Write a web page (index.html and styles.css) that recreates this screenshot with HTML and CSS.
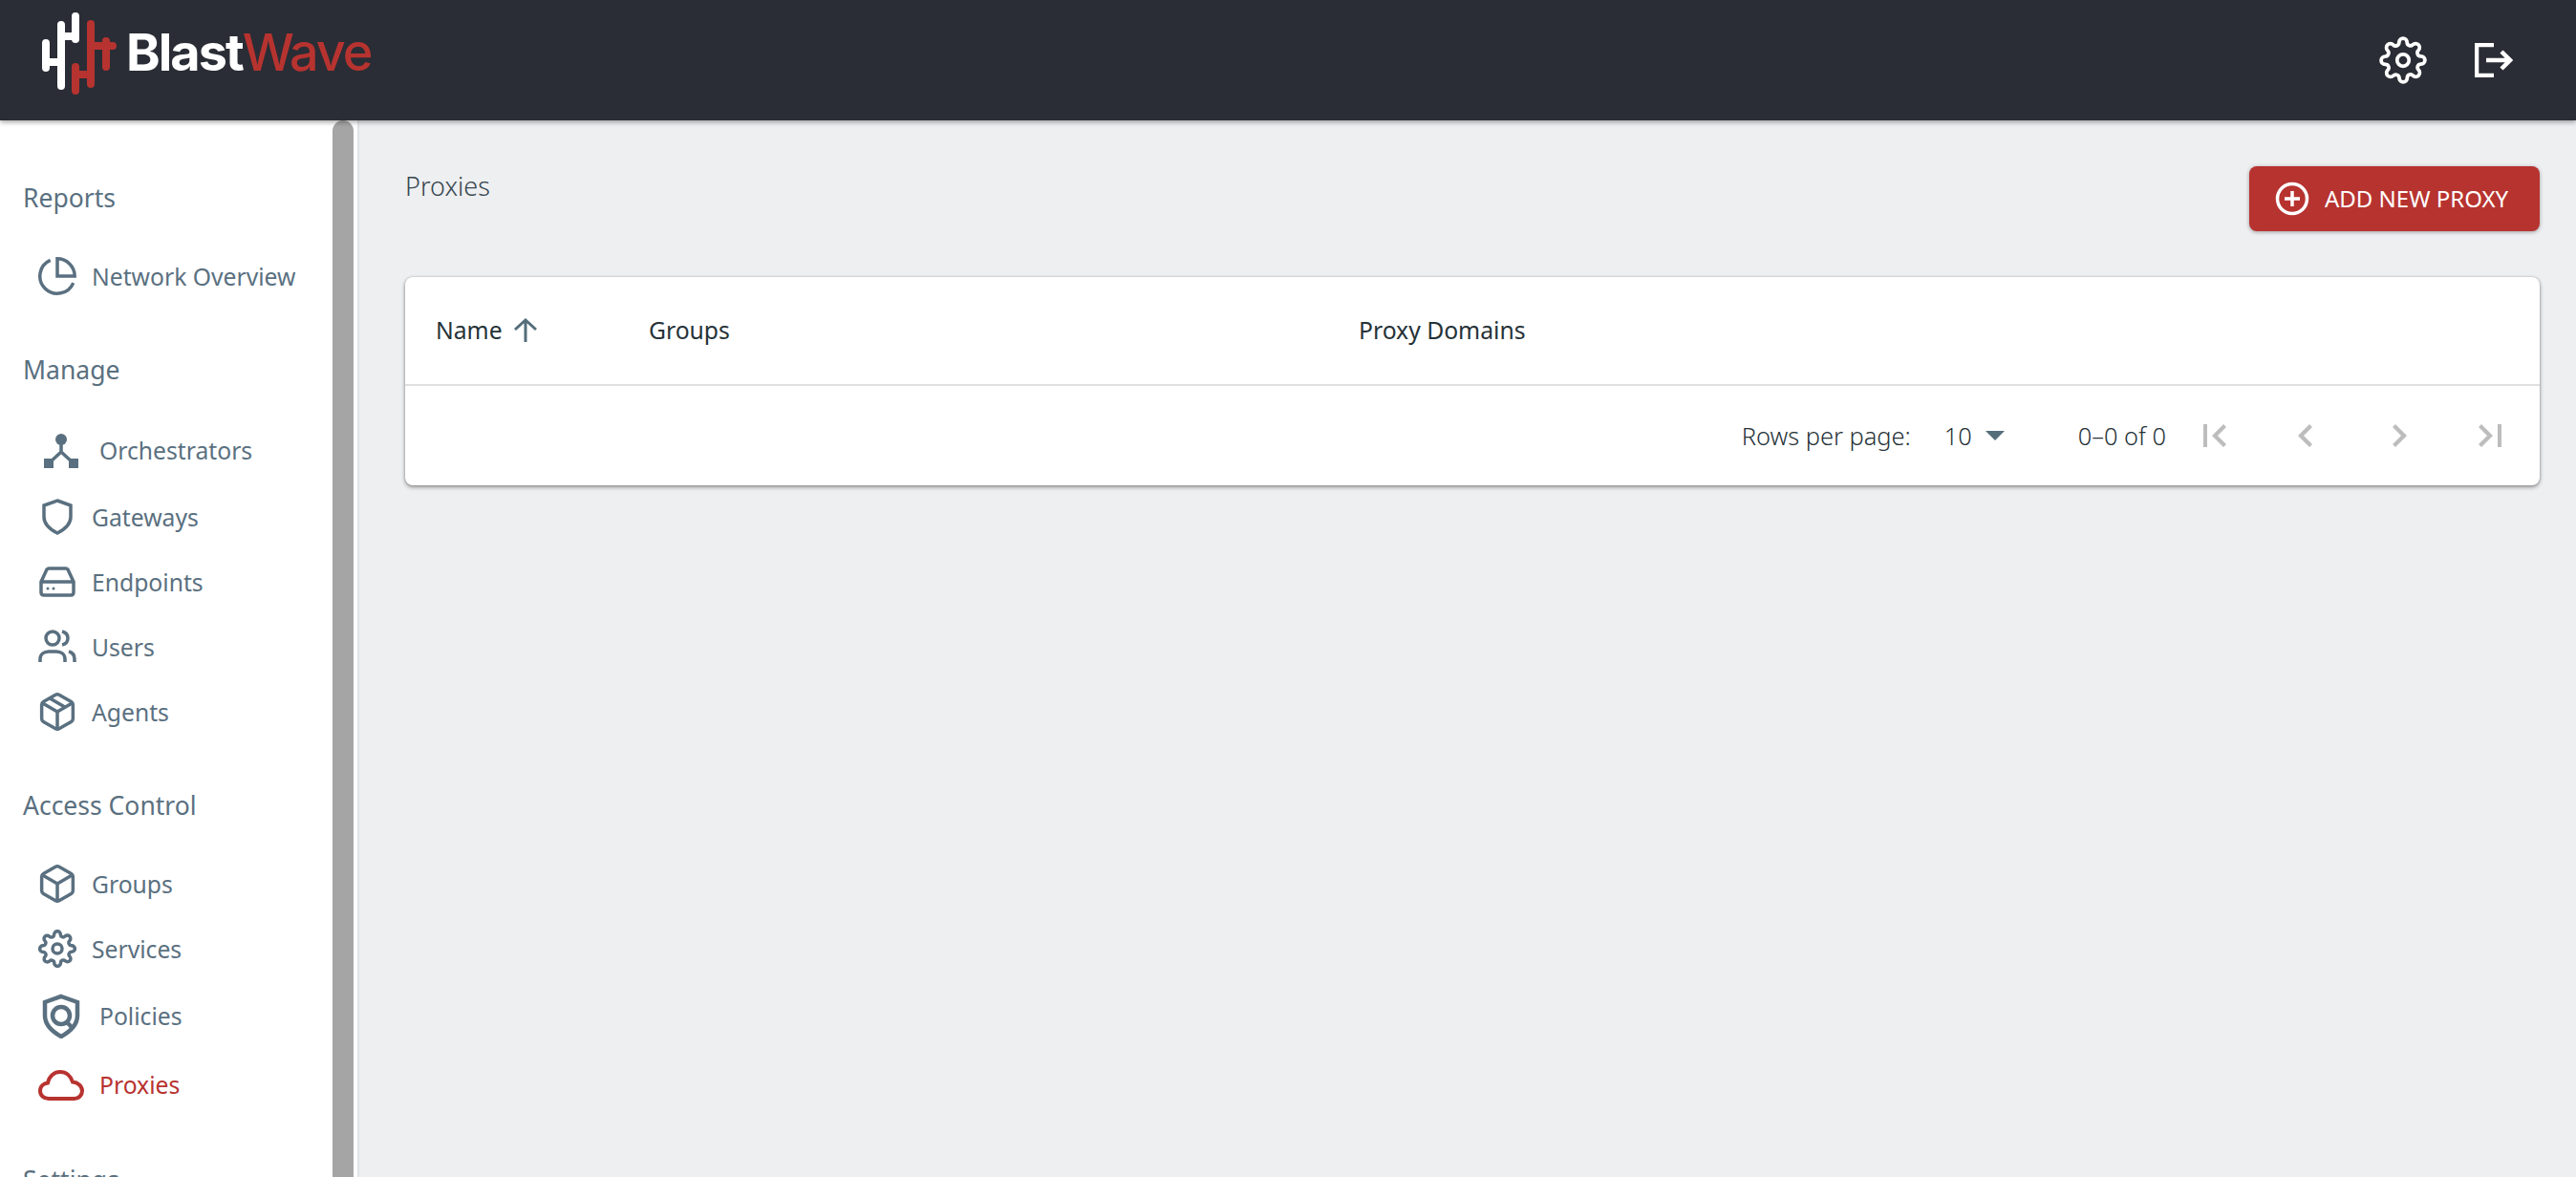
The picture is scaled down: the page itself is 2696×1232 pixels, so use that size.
FILE: index.html
```html
<!DOCTYPE html>
<html lang="en">
<head>
<meta charset="utf-8">
<title>Proxies</title>
<link rel="stylesheet" href="styles.css">
</head>
<body>
<header class="topbar">
  <div class="brand">
    <svg class="brand-mark" viewBox="0 0 80 90" fill="none" stroke-width="8" stroke-linecap="round">
      <path stroke="#fff" d="M4 34V60M4 54H20M20 15V79M20 27H35M35 6V30"/>
      <path stroke="#b73330" d="M35 59V84M35 67H51M51 14V77M51 37H74M67 32V59"/>
    </svg>
    <span class="brand-name"><b>Blast</b><span class="brand-wave">Wave</span></span>
  </div>
  <div class="top-actions">
    <svg class="top-gear" viewBox="0 0 24 24" fill="none" stroke="#fff" stroke-width="1.8"><circle cx="12" cy="12" r="3"/><path d="M19.4 15a1.65 1.65 0 0 0 .33 1.82l.06.06a2 2 0 0 1 0 2.83 2 2 0 0 1-2.83 0l-.06-.06a1.65 1.65 0 0 0-1.82-.33 1.65 1.65 0 0 0-1 1.51V21a2 2 0 0 1-2 2 2 2 0 0 1-2-2v-.09A1.65 1.65 0 0 0 9 19.4a1.65 1.65 0 0 0-1.82.33l-.06.06a2 2 0 0 1-2.83 0 2 2 0 0 1 0-2.83l.06-.06a1.65 1.65 0 0 0 .33-1.82 1.65 1.65 0 0 0-1.51-1H3a2 2 0 0 1-2-2 2 2 0 0 1 2-2h.09A1.65 1.65 0 0 0 4.6 9a1.65 1.65 0 0 0-.33-1.82l-.06-.06a2 2 0 0 1 0-2.83 2 2 0 0 1 2.83 0l.06.06a1.65 1.65 0 0 0 1.82.33H9a1.65 1.65 0 0 0 1-1.51V3a2 2 0 0 1 2-2 2 2 0 0 1 2 2v.09a1.65 1.65 0 0 0 1 1.51 1.65 1.65 0 0 0 1.82-.33l.06-.06a2 2 0 0 1 2.83 0 2 2 0 0 1 0 2.83l-.06.06a1.65 1.65 0 0 0-.33 1.82V9a1.65 1.65 0 0 0 1.51 1H21a2 2 0 0 1 2 2 2 2 0 0 1-2 2h-.09a1.65 1.65 0 0 0-1.51 1z"/></svg>
    <svg class="top-logout" viewBox="0 0 40 36" fill="none" stroke="#fff" stroke-width="4.500"><path d="M20 2H2V34H20"/><path d="M12 18H37M28 9L37 18L28 27"/></svg>
  </div>
</header>
<div class="layout">
  <aside class="sidebar">
    <nav class="nav">
      <h2 class="nav-title">Reports</h2>
      <a class="nav-item"><svg class="nav-icon" viewBox="1 1 22 22"><path d="M21.21 15.89A10 10 0 1 1 8 2.83"/><path d="M22 12A10 10 0 0 0 12 2v10z"/></svg><span>Network Overview</span></a>

      <h2 class="nav-title">Manage</h2>
      <a class="nav-item nav-item-large"><svg class="nav-icon" viewBox="0 0 48 48"><circle class="fill" cx="24" cy="13" r="6"/><rect class="fill" x="6" y="33" width="10" height="10"/><rect class="fill" x="32" y="33" width="10" height="10"/><path d="M24 16V26L11 38M24 26L37 38"/></svg><span>Orchestrators</span></a>
      <a class="nav-item"><svg class="nav-icon" viewBox="0 0 40 40"><path class="thick" d="M20 3L34 8V20C34 28 28 33 20 37C12 33 6 28 6 20V8Z"/></svg><span>Gateways</span></a>
      <a class="nav-item"><svg class="nav-icon" viewBox="0 0 40 40"><path class="thick" d="M3 20L9 7Q10 6 11 6H29Q30 6 31 7L37 20V31Q37 34 34 34H6Q3 34 3 31ZM3 20H37"/><circle class="fill" cx="10" cy="27" r="1.500"/><circle class="fill" cx="16" cy="27" r="1.500"/></svg><span>Endpoints</span></a>
      <a class="nav-item"><svg class="nav-icon" viewBox="0 0 40 40"><circle class="thick" cx="15" cy="11" r="7"/><path class="thick" d="M2 36V33C2 28 6 25 11 25H19C24 25 28 28 28 33V36M25 4C29 5 31 8 31 11C31 14 29 17 25 18M32 25C36 26 38 29 38 33V36"/></svg><span>Users</span></a>
      <a class="nav-item"><svg class="nav-icon" viewBox="1 1 22 22"><path d="M16.5 9.4l-9-5.19"/><path d="M21 16V8a2 2 0 0 0-1-1.73l-7-4a2 2 0 0 0-2 0l-7 4A2 2 0 0 0 3 8v8a2 2 0 0 0 1 1.73l7 4a2 2 0 0 0 2 0l7-4A2 2 0 0 0 21 16z"/><path d="M3.27 6.96L12 12.01l8.73-5.05M12 22.08V12"/></svg><span>Agents</span></a>

      <h2 class="nav-title">Access Control</h2>
      <a class="nav-item"><svg class="nav-icon" viewBox="1 1 22 22"><path d="M21 16V8a2 2 0 0 0-1-1.73l-7-4a2 2 0 0 0-2 0l-7 4A2 2 0 0 0 3 8v8a2 2 0 0 0 1 1.73l7 4a2 2 0 0 0 2 0l7-4A2 2 0 0 0 21 16z"/><path d="M3.27 6.96L12 12.01l8.73-5.05M12 22.08V12"/></svg><span>Groups</span></a>
      <a class="nav-item"><svg class="nav-icon" viewBox="0 0 24 24"><circle cx="12" cy="12" r="3"/><path d="M19.4 15a1.65 1.65 0 0 0 .33 1.82l.06.06a2 2 0 0 1 0 2.83 2 2 0 0 1-2.83 0l-.06-.06a1.65 1.65 0 0 0-1.82-.33 1.65 1.65 0 0 0-1 1.51V21a2 2 0 0 1-2 2 2 2 0 0 1-2-2v-.09A1.65 1.65 0 0 0 9 19.4a1.65 1.65 0 0 0-1.82.33l-.06.06a2 2 0 0 1-2.83 0 2 2 0 0 1 0-2.83l.06-.06a1.65 1.65 0 0 0 .33-1.82 1.65 1.65 0 0 0-1.51-1H3a2 2 0 0 1-2-2 2 2 0 0 1 2-2h.09A1.65 1.65 0 0 0 4.6 9a1.65 1.65 0 0 0-.33-1.82l-.06-.06a2 2 0 0 1 0-2.83 2 2 0 0 1 2.83 0l.06.06a1.65 1.65 0 0 0 1.82.33H9a1.65 1.65 0 0 0 1-1.51V3a2 2 0 0 1 2-2 2 2 0 0 1 2 2v.09a1.65 1.65 0 0 0 1 1.51 1.65 1.65 0 0 0 1.82-.33l.06-.06a2 2 0 0 1 2.83 0 2 2 0 0 1 0 2.83l-.06.06a1.65 1.65 0 0 0-.33 1.82V9a1.65 1.65 0 0 0 1.51 1H21a2 2 0 0 1 2 2 2 2 0 0 1-2 2h-.09a1.65 1.65 0 0 0-1.51 1z"/></svg><span>Services</span></a>
      <a class="nav-item nav-item-large"><svg class="nav-icon" viewBox="0 0 48 48"><path class="heavy" d="M24 4L41 10V24C41 34 33 41 24 46C15 41 7 34 7 24V10Z"/><circle class="heavy" cx="24" cy="24" r="9"/><path class="heavy" d="M30 31L36 37"/></svg><span>Policies</span></a>
      <a class="nav-item nav-item-large nav-item-active"><svg class="nav-icon" viewBox="0 0 48 48"><path class="red-line" d="M11 39C6 39 2 35.500 2 31C2 26 6 23 10 22.500C11.500 15 17 11 23 11C29 11 34 15 36 21.500C41.500 22 46 26 46 31C46 35.500 42 39 38 39Z"/></svg><span>Proxies</span></a>

      <h2 class="nav-title">Settings</h2>
    </nav>
    <div class="scroll-track"><div class="scroll-thumb"></div></div>
  </aside>
  <main class="content">
    <div class="page-head">
      <h1 class="page-title">Proxies</h1>
      <button class="add-button">
        <svg viewBox="0 0 36 36" fill="none" stroke="#fff" stroke-width="3.500"><circle cx="18" cy="18" r="15.500"/><path d="M18 10V26M10 18H26"/></svg>
        <span>ADD NEW PROXY</span>
      </button>
    </div>
    <section class="card">
      <div class="table-head">
        <div class="col col-name"><span>Name</span>
          <svg viewBox="0 0 28 28" fill="none" stroke="#546e7a" stroke-width="3"><path d="M14 26V3M3 13L14 3L25 13"/></svg>
        </div>
        <div class="col col-groups">Groups</div>
        <div class="col">Proxy Domains</div>
      </div>
      <div class="table-foot">
        <span>Rows per page:</span>
        <span class="rows-value">10</span>
        <span class="rows-caret"></span>
        <span class="range">0–0 of 0</span>
        <div class="pager">
          <svg viewBox="0 0 48 48"><path d="M12 12V36H16V12ZM36 15L33 12L21 24L33 36L36 33L27 24Z"/></svg>
          <svg viewBox="0 0 48 48"><path d="M30 15L27 12L15 24L27 36L30 33L21 24Z"/></svg>
          <svg viewBox="0 0 48 48"><path d="M18 15L21 12L33 24L21 36L18 33L27 24Z"/></svg>
          <svg viewBox="0 0 48 48"><path d="M36 12V36H32V12ZM12 15L15 12L27 24L15 36L12 33L21 24Z"/></svg>
        </div>
      </div>
    </section>
  </main>
</div>
</body>
</html>
```
FILE: styles.css
```css
* { box-sizing: border-box; }
html, body { height: 100%; }
body {
  margin: 0;
  overflow: hidden;
  display: flex;
  flex-direction: column;
  background: #eeeff1;
  font-family: "Noto Sans", "Open Sans", sans-serif;
  color: #263238;
}
.topbar {
  flex: none;
  height: 126px;
  background: #2a2d35;
  display: flex;
  align-items: center;
  justify-content: space-between;
  box-shadow: 0 2px 5px rgba(0,0,0,.35);
  position: relative;
  z-index: 2;
}
.brand { display: flex; align-items: center; margin-left: 44px; height: 100%; }
.brand-mark { width: 80px; height: 90px; overflow: visible; margin-top: -14px; margin-right: 8px; }
.brand-name {
  font-family: "Inter", sans-serif;
  font-size: 54px;
  letter-spacing: -2px;
  color: #fff;
  line-height: 1;
  margin-top: -16px;
}
.brand-name b { font-weight: 700; }
.brand-wave { color: #b73330; font-weight: 500; }
.top-actions { display: flex; align-items: center; margin-right: 66px; gap: 50px; margin-top: -1px; }
.top-gear { width: 50px; height: 50px; }
.top-logout { width: 40px; height: 36px; }

.layout { flex: 1; display: flex; min-height: 0; }
.sidebar {
  flex: none;
  width: 376px;
  background: #fff;
  border-right: 2px solid #e2e3e5;
  display: flex;
  overflow: hidden;
}
.nav { width: 344px; padding-top: 60px; flex: none; }
.nav-title {
  margin: 0 0 29px 24px;
  height: 40px;
  line-height: 42px;
  font-size: 26.500px;
  font-weight: 400;
  color: #5a7080;
}
.nav-item {
  height: 68px;
  display: flex;
  align-items: center;
  padding-left: 40px;
  gap: 16px;
  font-size: 24.700px;
  line-height: 1;
  color: #5a7080;
}
.nav-item span { padding-top: 2px; }
.nav-item + .nav-title { margin-top: 43px; }
.nav-item-large { height: 72px; }
.nav-icon {
  width: 40px;
  height: 40px;
  flex: none;
  fill: none;
  stroke: currentColor;
  stroke-width: 1.900;
}
.nav-item-large .nav-icon { width: 48px; height: 48px; }
.nav-icon .fill { fill: currentColor; stroke: none; }
.nav-icon .thick { stroke-width: 3.500; }
.nav-icon .heavy { stroke-width: 4.500; }
.nav-icon .red-line { stroke-width: 4; }
.nav-icon path:not(.thick):not(.heavy):not(.red-line),
.nav-icon circle:not(.fill):not(.thick):not(.heavy) { vector-effect: non-scaling-stroke; stroke-width: 3.500; }
.nav-item-active { color: #b73330; }
.scroll-track { flex: none; width: 30px; padding-left: 4px; }
.scroll-thumb {
  width: 22px;
  height: 100%;
  background: #a5a5a5;
  border-radius: 11px 11px 0 0;
}

.content { flex: 1; min-width: 0; padding: 48px 38px 0 48px; }
.page-head {
  display: flex;
  justify-content: space-between;
  align-items: flex-start;
  height: 116px;
}
.page-title {
  margin: 0;
  font-size: 27px;
  font-weight: 300;
  line-height: 41px;
  color: #37474f;
}
.add-button {
  width: 304px;
  height: 68px;
  border: 0;
  border-radius: 8px;
  background: #b73330;
  color: #fff;
  font-family: inherit;
  font-size: 24px;
  line-height: 1;
  display: flex;
  align-items: center;
  gap: 16px;
  padding: 0 0 0 27px;
  box-shadow: 0 1px 4px rgba(0,0,0,.35);
}
.add-button svg { width: 36px; height: 36px; flex: none; }
.card {
  height: 218px;
  background: #fff;
  border-radius: 8px;
  box-shadow: 0 2px 4px rgba(0,0,0,.4), 0 0 2px rgba(0,0,0,.25);
}
.table-head {
  height: 114px;
  border-bottom: 2px solid #e0e0e0;
  display: flex;
  align-items: center;
  padding-left: 32px;
  font-size: 24.700px;
  line-height: 1;
  color: #263238;
}
.col-name { width: 223px; display: flex; align-items: center; gap: 10px; }
.col-name svg { width: 28px; height: 28px; }
.col-groups { width: 743px; }
.table-foot {
  height: 104px;
  display: flex;
  align-items: center;
  justify-content: flex-end;
  font-size: 25.400px;
  font-weight: 300;
  color: #263238;
  padding-right: 28px;
}
.rows-value { margin-left: 35px; }
.rows-caret {
  margin-left: 14px;
  border-left: 10px solid transparent;
  border-right: 10px solid transparent;
  border-top: 10px solid #546e7a;
}
.range { margin-left: 77px; }
.pager { display: flex; gap: 48px; margin-left: 27px; }
.pager svg { width: 48px; height: 48px; fill: #bdbdbd; }
```
